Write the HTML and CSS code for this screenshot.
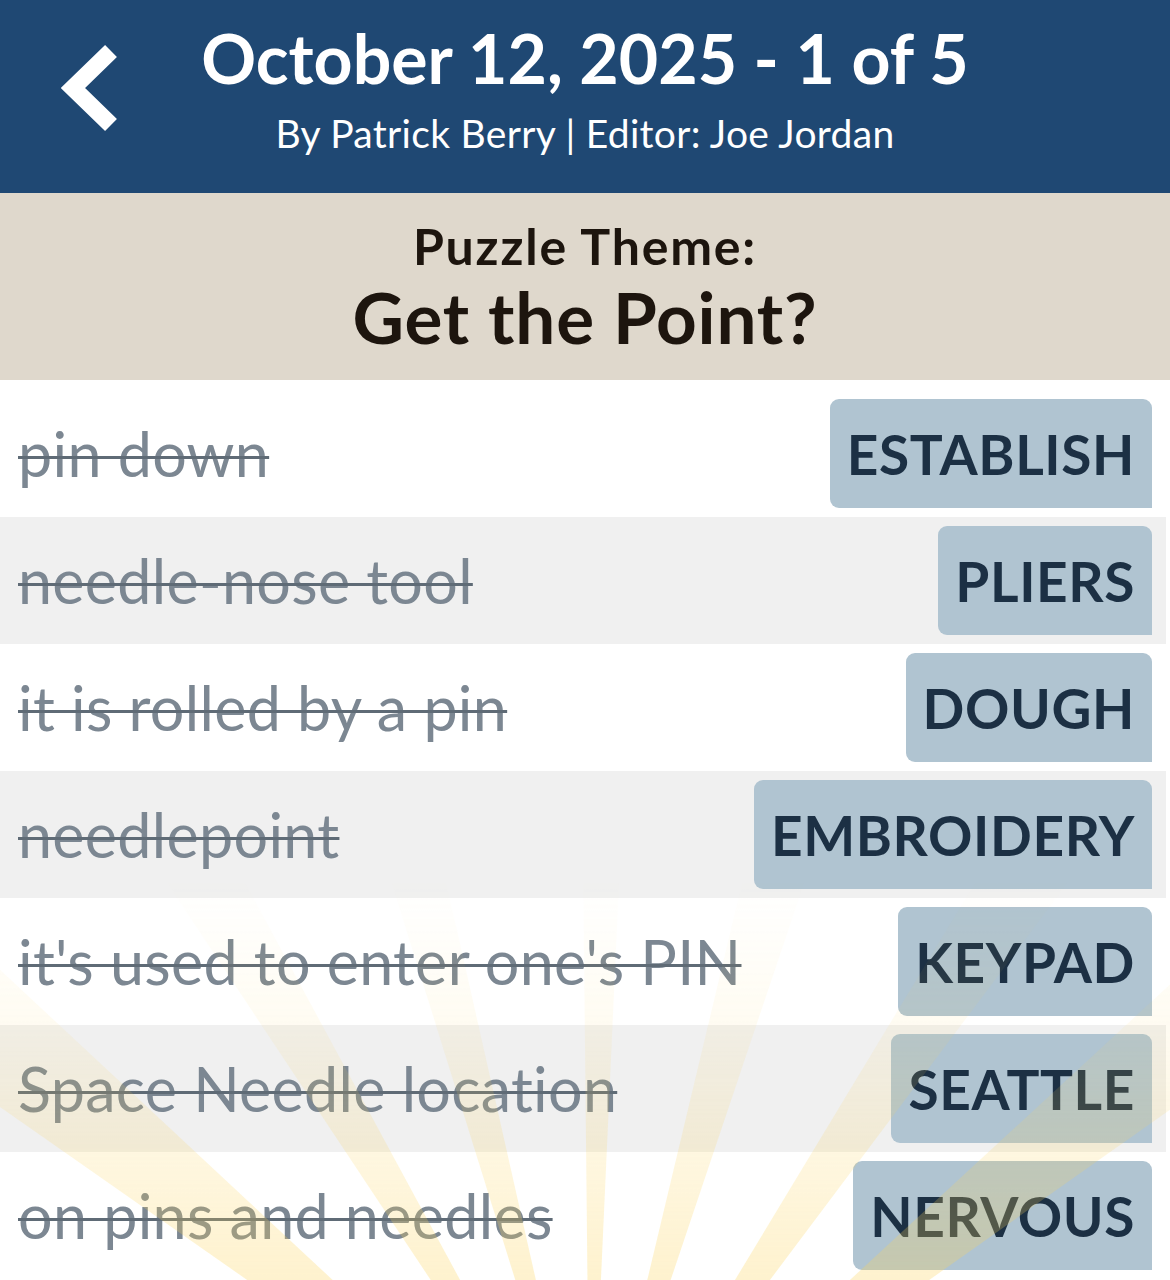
FILE: index.html
```html
<!DOCTYPE html>
<html lang="en">
<head>
<meta charset="utf-8">
<title>October 12, 2025 - 1 of 5</title>
<link rel="stylesheet" href="styles.css">
</head>
<body>
<div class="page">
  <header class="topbar">
    <div class="back">
      <svg class="chev" viewBox="0 0 60 90" width="60" height="90" aria-hidden="true">
        <polyline points="50,8 12,45 50,82" fill="none" stroke="#ffffff" stroke-width="17" stroke-linejoin="miter"/>
      </svg>
    </div>
    <div class="titles">
      <h1 class="title">October 12, 2025 - 1 of 5</h1>
      <p class="byline">By Patrick Berry | Editor: Joe Jordan</p>
    </div>
    <div></div>
  </header>

  <section class="theme">
    <div class="theme-label">Puzzle Theme:</div>
    <div class="theme-name">Get the Point?</div>
  </section>

  <ul class="clues">
    <li class="row"><span class="clue">pin down</span><span class="answer">ESTABLISH</span></li>
    <li class="row alt"><span class="clue">needle-nose tool</span><span class="answer">PLIERS</span></li>
    <li class="row"><span class="clue">it is rolled by a pin</span><span class="answer">DOUGH</span></li>
    <li class="row alt"><span class="clue">needlepoint</span><span class="answer">EMBROIDERY</span></li>
    <li class="row"><span class="clue">it's used to enter one's PIN</span><span class="answer">KEYPAD</span></li>
    <li class="row alt"><span class="clue">Space Needle location</span><span class="answer">SEATTLE</span></li>
    <li class="row"><span class="clue">on pins and needles</span><span class="answer">NERVOUS</span></li>
  </ul>

  <svg class="rays" viewBox="0 880 1170 400" width="1170" height="400" aria-hidden="true">
    <defs>
      <linearGradient id="fade" x1="0" y1="880" x2="0" y2="1280" gradientUnits="userSpaceOnUse">
        <stop offset="0" stop-color="#fff" stop-opacity="0"/>
        <stop offset="0.4" stop-color="#fff" stop-opacity="0.3"/>
        <stop offset="1" stop-color="#fff" stop-opacity="1"/>
      </linearGradient>
      <mask id="m" maskUnits="userSpaceOnUse" x="0" y="880" width="1170" height="400">
        <rect x="0" y="880" width="1170" height="400" fill="url(#fade)"/>
      </mask>
    </defs>
    <g mask="url(#m)" fill="#fcd45e" fill-opacity="0.3">
      <polygon points="590,1520 520,520 660,520" transform="rotate(-51 590 1520)"/>
      <polygon points="590,1520 545,520 635,520" transform="rotate(-31 590 1520)"/>
      <polygon points="590,1520 550,520 630,520" transform="rotate(-15 590 1520)"/>
      <polygon points="590,1520 562,520 618,520" transform="rotate(1 590 1520)"/>
      <polygon points="590,1520 545,520 635,520" transform="rotate(16 590 1520)"/>
      <polygon points="590,1520 540,520 640,520" transform="rotate(34 590 1520)"/>
      <polygon points="590,1520 525,520 655,520" transform="rotate(51 590 1520)"/>
    </g>
  </svg>
</div>
</body>
</html>
```

FILE: styles.css
```css
* { box-sizing: border-box; }

html, body {
  margin: 0;
  padding: 0;
  background: #ffffff;
}

body {
  font-family: "Lato", "Noto Sans", "DejaVu Sans", sans-serif;
}

.page {
  position: relative;
  width: 1170px;
  height: 1280px;
  overflow: hidden;
}

.topbar {
  height: 193px;
  background: #1f4873;
  display: grid;
  grid-template-columns: 1fr auto 1fr;
  align-items: start;
}

.back {
  padding: 43px 0 0 61px;
}

.chev {
  display: block;
}

.titles {
  text-align: center;
  color: #ffffff;
  padding-top: 18px;
}

.title {
  margin: 0;
  font-size: 68px;
  line-height: 80px;
  font-weight: 700;
}

.byline {
  margin: 10px 0 0;
  font-size: 39px;
  line-height: 50px;
  font-weight: 400;
  letter-spacing: 0.3px;
}

.theme {
  height: 187px;
  background: #dfd8cc;
  color: #1d150e;
  display: flex;
  flex-direction: column;
  align-items: center;
  padding-top: 24px;
}

.theme-label {
  font-size: 50px;
  line-height: 58px;
  font-weight: 700;
  letter-spacing: 1.8px;
}

.theme-name {
  font-size: 71px;
  line-height: 84px;
  font-weight: 700;
  letter-spacing: 0.8px;
}

.clues {
  list-style: none;
  margin: 0;
  padding: 10px 0 0;
}

.row {
  height: 127px;
  width: 1166px;
  display: flex;
  align-items: center;
  justify-content: space-between;
  padding: 0 14px 0 18px;
  background: #ffffff;
}

.row.alt {
  background: #f0f0f0;
}

.clue {
  font-size: 61px;
  letter-spacing: 0.3px;
  color: #7c8792;
  text-decoration: line-through;
  text-decoration-color: #5f6b76;
  text-decoration-thickness: 3px;
  white-space: nowrap;
}

.answer {
  height: 109px;
  display: flex;
  align-items: center;
  padding: 0 17px;
  background: #b0c4d1;
  border-radius: 9px 9px 0 9px;
  color: #1c3044;
  font-size: 55px;
  font-weight: 700;
  letter-spacing: 0.6px;
  white-space: nowrap;
}

.rays {
  position: absolute;
  left: 0;
  bottom: 0;
  pointer-events: none;
}
```
